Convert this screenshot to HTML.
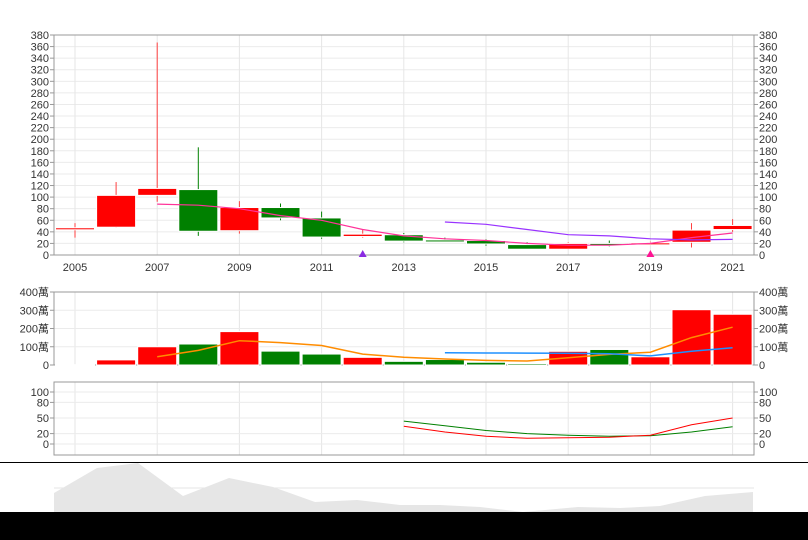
<!DOCTYPE html>
<html><head><meta charset="utf-8"><style>
html,body{margin:0;padding:0;background:#fff;width:808px;height:540px;overflow:hidden}
svg{display:block}
text{font-family:"Liberation Sans","Noto Sans CJK TC",sans-serif;font-size:11px;fill:#333}
</style></head><body>
<svg id="s" width="808" height="540" xmlns="http://www.w3.org/2000/svg"></svg>
<script>
var s=document.getElementById('s'),h='';
function X(i){return 75+41.1*i}
function Y(v){return 255-v*220/380}
function V(v){return 365-v*73/400}
function T(v){return 444-v*0.52}
for(var v=0;v<=380;v+=20){var y=Y(v);h+='<line x1="54" x2="754" y1="'+y+'" y2="'+y+'" stroke="#ebebeb"/>';
h+='<line x1="50" x2="54" y1="'+y+'" y2="'+y+'" stroke="#999"/><line x1="754" x2="758" y1="'+y+'" y2="'+y+'" stroke="#999"/>';
h+='<text x="49" y="'+(y+4)+'" text-anchor="end">'+v+'</text><text x="759" y="'+(y+4)+'">'+v+'</text>';}
for(var i=0;i<=16;i+=2){var x=X(i);h+='<line x1="'+x+'" x2="'+x+'" y1="35" y2="255" stroke="#e6e6e6"/><line x1="'+x+'" x2="'+x+'" y1="292" y2="365" stroke="#e6e6e6"/><line x1="'+x+'" x2="'+x+'" y1="382" y2="455" stroke="#e6e6e6"/>';
h+='<text x="'+x+'" y="271" text-anchor="middle">'+(2005+i)+'</text>';}
h+='<rect x="54" y="35" width="700" height="220" fill="none" stroke="#999"/>';
var c=[[45,47,30,55,'r'],[48,103,47,126,'r'],[103,115,92,367,'r'],[41,113,33,186,'g'],[42,82,37,93,'r'],[64,82,60,89,'g'],[31,64,28,75,'g'],[32,36,30,44,'r'],[24,35,22,38,'g'],[24,26,23,30,'g'],[19,25,16,27,'g'],[10,18,10,22,'g'],[10,20,9,22,'r'],[18,20,15,25,'g'],[18,21,17,23,'r'],[22,43,13,55,'r'],[44,51,40,62,'r']];
c.forEach(function(d,i){var x=X(i),col=d[4]=='r'?'#ff0000':'#008000',wc=d[4]=='r'?'#ff4040':'#008000';
h+='<line x1="'+x+'" x2="'+x+'" y1="'+Y(d[3])+'" y2="'+Y(d[2])+'" stroke="'+wc+'"/>';
var y1=Y(d[1]),y2=Y(d[0]);h+='<rect x="'+(x-19.5)+'" y="'+y1+'" width="39" height="'+Math.max(2,y2-y1)+'" fill="'+col+'" stroke="#fff" stroke-width="1"/>';});
function line(arr,start,fx,fy,col,w){var p=arr.map(function(v,k){return X(start+k).toFixed(1)+','+fy(v).toFixed(1)}).join(' ');h+='<polyline points="'+p+'" fill="none" stroke="'+col+'" stroke-width="'+(w||1.2)+'"/>';}
line([88,86,80,68,60,44,33,28,25,20,17,17,20,30,38],2,Y,Y,'#ff3399');
line([57,53,44,35,33,28,26,27],9,Y,Y,'#9933ff');
h+='<polygon points="'+X(7)+',250 '+(X(7)-4)+',257 '+(X(7)+4)+',257" fill="#8a2be2"/>';
h+='<polygon points="'+X(14)+',250 '+(X(14)-4)+',257 '+(X(14)+4)+',257" fill="#ff1493"/>';
[0,100,200,300,400].forEach(function(v){var y=V(v),l=v?v+'萬':'0';h+='<line x1="54" x2="754" y1="'+y+'" y2="'+y+'" stroke="#ebebeb"/><line x1="50" x2="54" y1="'+y+'" y2="'+y+'" stroke="#999"/><line x1="754" x2="758" y1="'+y+'" y2="'+y+'" stroke="#999"/><text x="49" y="'+(y+4)+'" text-anchor="end">'+l+'</text><text x="759" y="'+(y+4)+'">'+l+'</text>';});
h+='<rect x="54" y="292" width="700" height="73" fill="none" stroke="#999"/>';
var vol=[2,28,100,115,183,76,60,42,20,30,15,8,75,85,45,303,278],vc='rrrgrggrggggrgrrr';
vol.forEach(function(v,i){var y=V(v);h+='<rect x="'+(X(i)-19.5)+'" y="'+y+'" width="39" height="'+(365-y)+'" fill="'+(i==0?'#ff8080':(vc[i]=='r'?'#ff0000':'#008000'))+'" stroke="#fff"/>';});
line([45,80,133,123,107,60,42,33,25,22,40,58,70,150,207],2,V,V,'#ff8c00',1.5);
line([67,66,65,64,62,50,75,95],9,V,V,'#1e90ff',1.5);
[0,20,50,80,100].forEach(function(v){var y=T(v);h+='<line x1="54" x2="754" y1="'+y+'" y2="'+y+'" stroke="#ebebeb"/><line x1="50" x2="54" y1="'+y+'" y2="'+y+'" stroke="#999"/><line x1="754" x2="758" y1="'+y+'" y2="'+y+'" stroke="#999"/><text x="49" y="'+(y+4)+'" text-anchor="end">'+v+'</text><text x="759" y="'+(y+4)+'">'+v+'</text>';});
h+='<rect x="54" y="382" width="700" height="73" fill="none" stroke="#999"/>';
line([44,35,26,20,17,15,16,23,33],8,T,T,'#008000',1);
line([34,23,15,11,12,13,17,37,50],8,T,T,'#ff0000',1);
h+='<line x1="54" x2="754" y1="488" y2="488" stroke="#e6e6e6"/>';
h+='<polygon points="54,512 54,493 97,468 138,463 183,496 229,478 273,487 315,502 357,500 400,505 440,505 480,507 523,512 578,507 620,508 660,506 705,496 753,492 753,512" fill="#e6e6e6"/>';
h+='<line x1="0" x2="808" y1="462.5" y2="462.5" stroke="#000"/>';
h+='<rect x="0" y="512" width="808" height="28" fill="#000"/>';
s.innerHTML=h;
</script>
</body></html>
